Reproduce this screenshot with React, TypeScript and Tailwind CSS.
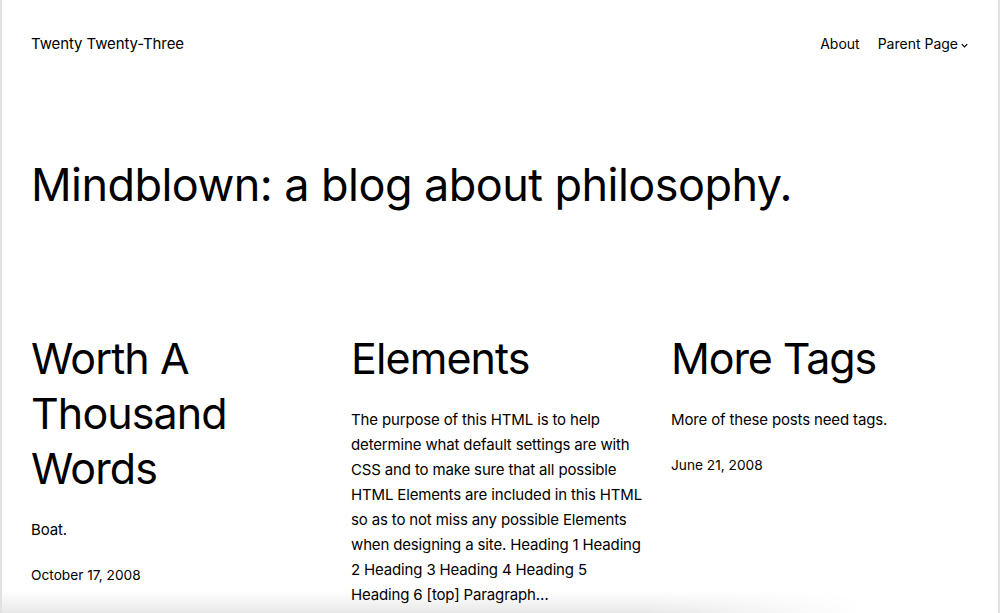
import React from "react";

const font = { fontFamily: 'Inter, "Noto Sans", "Liberation Sans", sans-serif' };

export default function App() {
  return (
    <div
      className="relative w-[1000px] h-[613px] overflow-hidden bg-white text-black border-l-2 border-r-2 border-[#e2e2e2]"
      style={font}
    >
      <header className="flex items-center justify-between pl-[29px] pr-[29px] pt-[34px]">
        <div className="text-[15px] leading-[20px] tracking-[-0.1px]">Twenty Twenty-Three</div>
        <nav className="flex items-center gap-[18px] text-[14px] leading-[20px]">
          <span>About</span>
          <span className="flex items-center gap-[2px]">
            Parent Page
            <svg width="9" height="9" viewBox="0 0 10 10" className="mt-[2px]">
              <path d="M2 3.5 L5 6.5 L8 3.5" fill="none" stroke="#000" strokeWidth="1.3" />
            </svg>
          </span>
        </nav>
      </header>

      <h1 className="pl-[29px] mt-[103px] text-[45px] leading-[56px] tracking-[-0.55px] font-normal">
        Mindblown: a blog about philosophy.
      </h1>

      <div className="grid grid-cols-3 gap-x-[22px] pl-[29px] pr-[29px] mt-[118px]">
        <article>
          <h2 className="text-[43px] leading-[55px] tracking-[-0.9px] font-normal">
            Worth A
            <br />
            Thousand
            <br />
            Words
          </h2>
          <p className="mt-[21px] text-[15px] leading-[25px] tracking-[-0.15px]">Boat.</p>
          <p className="mt-[23px] text-[13.7px] leading-[20px]">October 17, 2008</p>
        </article>
        <article>
          <h2 className="text-[43px] leading-[55px] tracking-[-0.9px] font-normal">Elements</h2>
          <p className="mt-[21px] text-[15px] leading-[25px] tracking-[-0.15px] whitespace-nowrap">
            The purpose of this HTML is to help
            <br />
            determine what default settings are with
            <br />
            CSS and to make sure that all possible
            <br />
            HTML Elements are included in this HTML
            <br />
            so as to not miss any possible Elements
            <br />
            when designing a site. Heading 1 Heading
            <br />
            2 Heading 3 Heading 4 Heading 5
            <br />
            Heading 6 [top] Paragraph…
          </p>
        </article>
        <article>
          <h2 className="text-[43px] leading-[55px] tracking-[-1.1px] font-normal">More Tags</h2>
          <p className="mt-[21px] text-[15px] leading-[25px] tracking-[-0.15px]">More of these posts need tags.</p>
          <p className="mt-[23px] text-[13.7px] leading-[20px]">June 21, 2008</p>
        </article>
      </div>

      <div className="pointer-events-none absolute bottom-0 left-0 w-[860px] h-[22px] bg-[linear-gradient(to_bottom,rgba(0,0,0,0),rgba(0,0,0,0.09))] [mask-image:linear-gradient(to_right,black_75%,transparent)]" />
    </div>
  );
}
